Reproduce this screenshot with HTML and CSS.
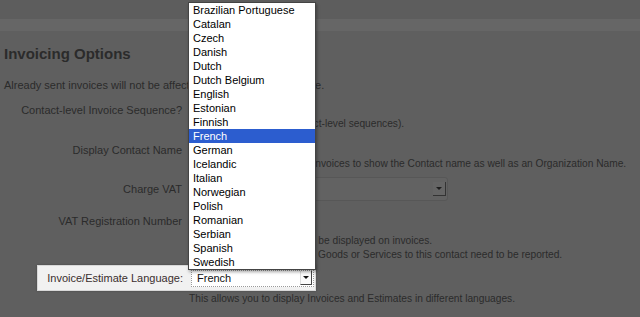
FILE: index.html
```html
<!DOCTYPE html>
<html lang="en">
<head>
    <meta charset="UTF-8">
    <title>Invoicing Options</title>
    <link rel="stylesheet" href="styles.css">
</head>
<body>
    <div class="topbar"></div>
    <div class="subbar"></div>
    <div class="page">
        <h2>Invoicing Options</h2>
        <p class="intro">Already sent invoices will not be affected by changes to this page.</p>

        <div class="row row-seq">
            <label>Contact-level Invoice Sequence?</label>
            <div class="field">
                <span class="check"></span>
                <p class="help">(Otherwise, uses non-contact-level sequences).</p>
            </div>
        </div>

        <div class="row row-name">
            <label>Display Contact Name</label>
            <div class="field">
                <span class="check"></span>
                <p class="help">Check this box, if you want invoices to show the Contact name as well as an Organization Name.</p>
            </div>
        </div>

        <div class="row row-vat">
            <label>Charge VAT</label>
            <div class="field">
                <div class="dim-select"><span class="dim-arrow"></span></div>
            </div>
        </div>

        <div class="row row-reg">
            <label>VAT Registration Number</label>
            <div class="field">
                <div class="dim-input"></div>
                <p class="help">The client's VAT number will be displayed on invoices.</p>
                <p class="help">Required, if any EC sales of Goods or Services to this contact need to be reported.</p>
            </div>
        </div>

        <div class="row-lang">
            <div class="lang-box">
                <label>Invoice/Estimate Language:</label>
                <div class="select">
                    <span>French</span>
                    <span class="arrow"></span>
                </div>
            </div>
            <p class="help lang-help">This allows you to display Invoices and Estimates in different languages.</p>
        </div>
    </div>

    <ul class="menu">
        <li>Brazilian Portuguese</li>
        <li>Catalan</li>
        <li>Czech</li>
        <li>Danish</li>
        <li>Dutch</li>
        <li>Dutch Belgium</li>
        <li>English</li>
        <li>Estonian</li>
        <li>Finnish</li>
        <li class="selected">French</li>
        <li>German</li>
        <li>Icelandic</li>
        <li>Italian</li>
        <li>Norwegian</li>
        <li>Polish</li>
        <li>Romanian</li>
        <li>Serbian</li>
        <li>Spanish</li>
        <li>Swedish</li>
    </ul>
</body>
</html>
```

FILE: styles.css
```css
body { margin: 0; background: #5f5f5f; font-family: "Liberation Sans", Arial, sans-serif; font-size: 11px; color: #2b2b2b; overflow: hidden; }
.topbar { height: 19px; background: #5d5d5d; }
.subbar { height: 12px; background: #666; }
h2 { margin: 14px 0 0 4px; font-size: 15px; line-height: 18px; }
p { margin: 0; }
.intro { margin: 15px 0 0 4px; line-height: 14px; }
.help { font-size: 10.2px; line-height: 14px; white-space: nowrap; }

.row { display: grid; grid-template-columns: 182px 1fr; column-gap: 7px; }
.row label { text-align: right; line-height: 14px; }
.row-seq { margin-top: 11px; }
.row-name { margin-top: 12px; }
.row-vat { margin-top: 6px; align-items: center; }
.row-reg { margin-top: 8px; }
.row-reg label { padding-top: 5px; }
.check { display: block; width: 12px; height: 12px; margin: 1px 0 1px 2px; }

.dim-select { position: relative; width: 257px; height: 22px; border: 1px solid #575757; border-radius: 3px; background: #626262; }
.dim-arrow { position: absolute; right: 1px; top: 4px; width: 12px; height: 13px; border-right: 1px solid #333; border-bottom: 1px solid #333; background: #656565; }
.dim-arrow::after { content: ""; position: absolute; left: 3px; top: 5px; border: 3px solid transparent; border-top: 3px solid #1e1e1e; border-bottom: 0; }
.dim-input { width: 120px; height: 20px; margin-bottom: 5px; }

.row-lang { margin-top: 3px; }
.lang-box { display: flex; align-items: center; margin-left: 37px; width: 277px; height: 24px; background: #f1f1f1; border: 1px solid #d8d8d8; box-shadow: 0 0 2px rgba(0,0,0,0.25); }
.lang-box label { width: 145px; text-align: right; color: #3a2e2e; }
.select { display: flex; align-items: center; justify-content: space-between; margin-left: 8px; width: 121px; height: 15px; background: #fff; border: 1px dotted #9a9a9a; }
.select span:first-child { padding-left: 5px; color: #111; }
.arrow { position: relative; width: 10px; height: 13px; margin-right: 1px; background: #fafafa; border-left: 1px solid #ddd; border-right: 1px solid #444; border-bottom: 1px solid #444; }
.arrow::after { content: ""; position: absolute; left: 2px; top: 5px; border: 3px solid transparent; border-top: 3px solid #111; border-bottom: 0; }
.lang-help { margin: 1px 0 0 189px; }

.menu { position: absolute; top: 2px; left: 188px; width: 126px; margin: 0; padding: 0; list-style: none; background: #fff; border: 1px solid #444; box-shadow: 1px 2px 3px rgba(0,0,0,0.35); color: #000; }
.menu li { height: 14px; line-height: 14px; padding-left: 4px; white-space: nowrap; }
.menu .selected { background: #2c5dcf; color: #fff; }
```
